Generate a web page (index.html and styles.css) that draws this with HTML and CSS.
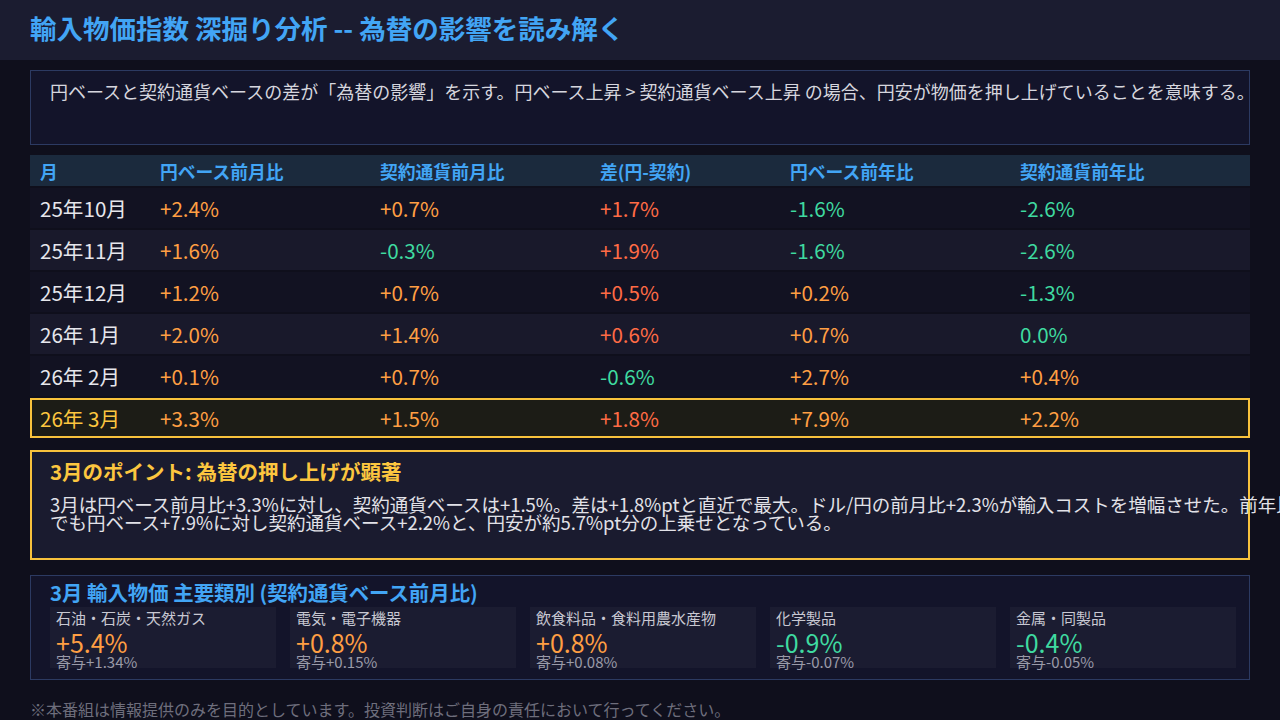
FILE: index.html
```html
<!DOCTYPE html>
<html lang="ja">
<head>
<meta charset="utf-8">
<title>輸入物価指数 深掘り分析</title>
<link rel="stylesheet" href="styles.css">
</head>
<body>
<header class="topbar">
  <h1 class="title">輸入物価指数 深掘り分析 -- 為替の影響を読み解く</h1>
</header>
<main class="content">
  <section class="info">円ベースと契約通貨ベースの差が「為替の影響」を示す。円ベース上昇 &gt; 契約通貨ベース上昇 の場合、円安が物価を押し上げていることを意味する。</section>

  <section class="table">
    <div class="row head">
      <div class="cell">月</div>
      <div class="cell">円ベース前月比</div>
      <div class="cell">契約通貨前月比</div>
      <div class="cell">差(円-契約)</div>
      <div class="cell">円ベース前年比</div>
      <div class="cell">契約通貨前年比</div>
    </div>
    <div class="row odd">
      <div class="cell month">25年10月</div>
      <div class="cell up">+2.4%</div>
      <div class="cell up">+0.7%</div>
      <div class="cell diff">+1.7%</div>
      <div class="cell down">-1.6%</div>
      <div class="cell down">-2.6%</div>
    </div>
    <div class="row even">
      <div class="cell month">25年11月</div>
      <div class="cell up">+1.6%</div>
      <div class="cell down">-0.3%</div>
      <div class="cell diff">+1.9%</div>
      <div class="cell down">-1.6%</div>
      <div class="cell down">-2.6%</div>
    </div>
    <div class="row odd">
      <div class="cell month">25年12月</div>
      <div class="cell up">+1.2%</div>
      <div class="cell up">+0.7%</div>
      <div class="cell diff">+0.5%</div>
      <div class="cell up">+0.2%</div>
      <div class="cell down">-1.3%</div>
    </div>
    <div class="row even">
      <div class="cell month">26年 1月</div>
      <div class="cell up">+2.0%</div>
      <div class="cell up">+1.4%</div>
      <div class="cell diff">+0.6%</div>
      <div class="cell up">+0.7%</div>
      <div class="cell down">0.0%</div>
    </div>
    <div class="row odd">
      <div class="cell month">26年 2月</div>
      <div class="cell up">+0.1%</div>
      <div class="cell up">+0.7%</div>
      <div class="cell down">-0.6%</div>
      <div class="cell up">+2.7%</div>
      <div class="cell up">+0.4%</div>
    </div>
    <div class="row current">
      <div class="cell month">26年 3月</div>
      <div class="cell up">+3.3%</div>
      <div class="cell up">+1.5%</div>
      <div class="cell diff">+1.8%</div>
      <div class="cell up">+7.9%</div>
      <div class="cell up">+2.2%</div>
    </div>
  </section>

  <section class="point">
    <h2 class="point-title">3月のポイント: 為替の押し上げが顕著</h2>
    <p class="point-body">3月は円ベース前月比+3.3%に対し、契約通貨ベースは+1.5%。差は+1.8%ptと直近で最大。ドル/円の前月比+2.3%が輸入コストを増幅させた。前年比<br>でも円ベース+7.9%に対し契約通貨ベース+2.2%と、円安が約5.7%pt分の上乗せとなっている。</p>
  </section>

  <section class="cats">
    <h2 class="cats-title">3月 輸入物価 主要類別 (契約通貨ベース前月比)</h2>
    <div class="cards">
      <div class="card">
        <div class="card-label">石油・石炭・天然ガス</div>
        <div class="card-value up">+5.4%</div>
        <div class="card-sub">寄与+1.34%</div>
      </div>
      <div class="card">
        <div class="card-label">電気・電子機器</div>
        <div class="card-value up">+0.8%</div>
        <div class="card-sub">寄与+0.15%</div>
      </div>
      <div class="card">
        <div class="card-label">飲食料品・食料用農水産物</div>
        <div class="card-value up">+0.8%</div>
        <div class="card-sub">寄与+0.08%</div>
      </div>
      <div class="card">
        <div class="card-label">化学製品</div>
        <div class="card-value down">-0.9%</div>
        <div class="card-sub">寄与-0.07%</div>
      </div>
      <div class="card">
        <div class="card-label">金属・同製品</div>
        <div class="card-value down">-0.4%</div>
        <div class="card-sub">寄与-0.05%</div>
      </div>
    </div>
  </section>

  <footer class="note">※本番組は情報提供のみを目的としています。投資判断はご自身の責任において行ってください。</footer>
</main>
</body>
</html>
```

FILE: styles.css
```css
html, body {
  margin: 0;
  padding: 0;
  width: 1280px;
  height: 720px;
  overflow: hidden;
  background: #0f0f1c;
  font-family: "Noto Sans CJK JP", "Noto Sans", sans-serif;
  color: #e4e4ea;
}

.topbar {
  height: 60px;
  background: #1b1c30;
  display: flex;
  align-items: center;
  padding: 0 30px 5px;
  box-sizing: border-box;
}

.title {
  margin: 0;
  font-size: 26.5px;
  font-weight: 700;
  color: #42a5f5;
  line-height: 1.2;
}

.content {
  padding: 10px 30px 0;
  display: flex;
  flex-direction: column;
}

.info {
  height: 75px;
  box-sizing: border-box;
  border: 1px solid #2c3a62;
  background: #13142a;
  padding: 7px 19px;
  font-size: 18px;
  line-height: 27px;
  color: #d6d6de;
  white-space: nowrap;
}

.table {
  margin-top: 10px;
  display: flex;
  flex-direction: column;
  gap: 2px;
}

.row {
  display: grid;
  grid-template-columns: 120px 220px 220px 190px 230px 1fr;
  height: 40px;
  align-items: center;
  font-size: 20.6px;
  box-sizing: border-box;
}

.row.head {
  height: 31px;
  background: #1b2a3d;
  color: #42a5f5;
  font-size: 17.8px;
  font-weight: 700;
}

.row.odd { background: #121222; }
.row.even { background: #19192b; }

.row.current {
  background: #1c1c16;
  box-shadow: inset 0 0 0 2px #f8c23c;
}

.cell {
  padding-left: 10px;
  white-space: nowrap;
}

.month { color: #e6e6ec; }
.row.current .month { color: #fcc63f; }

.up { color: #ff9f43; }
.diff { color: #ff6b45; }
.down { color: #3fdaa0; }

.point {
  margin-top: 12px;
  height: 110px;
  box-sizing: border-box;
  border: 2px solid #f8c23c;
  background: #1a1b2f;
  padding: 7px 18px 0;
}

.point-title {
  margin: 0;
  font-size: 20.5px;
  line-height: 24px;
  font-weight: 700;
  color: #fcc63f;
}

.point-body {
  margin: 12px 0 0;
  font-size: 18.5px;
  line-height: 18px;
  color: #e2e2e8;
  white-space: nowrap;
}

.cats {
  margin-top: 15px;
  height: 105px;
  box-sizing: border-box;
  border: 1px solid #2c3a62;
  background: #13142a;
  padding: 4px 13px 0 19px;
}

.cats-title {
  margin: 0;
  font-size: 20.4px;
  line-height: 24px;
  font-weight: 700;
  color: #42a5f5;
}

.cards {
  margin-top: 3px;
  display: grid;
  grid-template-columns: repeat(5, 226px);
  gap: 14px;
}

.card {
  height: 61px;
  background: #1b1c31;
  padding: 2px 6px 0;
  box-sizing: border-box;
}

.card-label {
  font-size: 15px;
  line-height: 18px;
  color: #c8c8d2;
  white-space: nowrap;
}

.card-value {
  font-size: 25px;
  line-height: 30px;
}

.card-sub {
  margin-top: -4px;
  font-size: 15px;
  line-height: 18px;
  color: #9a9aa8;
}

.note {
  margin-top: 19px;
  font-size: 16px;
  line-height: 20px;
  color: #6e6e7c;
  white-space: nowrap;
}
```
